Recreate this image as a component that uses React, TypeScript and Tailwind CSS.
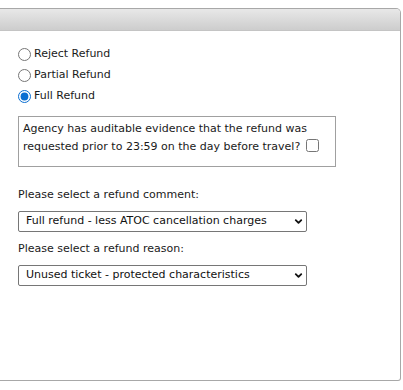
import { ChevronDown } from 'lucide-react'

const options = ['Reject Refund', 'Partial Refund', 'Full Refund']

function Select({ value }: { value: string }) {
  return (
    <div className="relative w-[289px] h-[21px]">
      <select
        defaultValue={value}
        className="appearance-none w-full h-full border border-[#767676] rounded-[2px] bg-white pl-[7px] pr-6 text-[11px] text-[#111] outline-none"
      >
        <option>{value}</option>
      </select>
      <ChevronDown
        className="absolute right-[3px] top-[5px] w-[11px] h-[11px] text-[#111] pointer-events-none"
        strokeWidth={4}
      />
    </div>
  )
}

export default function App() {
  return (
    <div className="w-[403px] h-[390px] bg-white pt-[8px] font-['DejaVu_Sans',sans-serif] text-[11px] text-[#1a1a1a]">
      <div className="w-[401px] h-[373px] border border-l-0 border-[#a8a8a8] rounded-tr-[5px] rounded-br-[3px] overflow-hidden flex flex-col">
        {/* header bar */}
        <div className="h-[22px] bg-gradient-to-b from-[#e8e8e8] to-[#cdcdcd] border-b border-[#c4c4c4]" />

        <div className="pl-[18px] pt-[13px]">
          {/* refund type */}
          <div className="flex flex-col">
            {options.map((o) => (
              <label key={o} className="h-[21px] flex items-center gap-[3px]">
                <input
                  type="radio"
                  name="refund"
                  defaultChecked={o === 'Full Refund'}
                  className="m-0 w-[13px] h-[13px] accent-[#0a6ed1]"
                />
                <span>{o}</span>
              </label>
            ))}
          </div>

          {/* evidence box */}
          <div className="mt-[9px] w-[318px] border border-[#a0a0a0] pl-[4px] pt-[3px] pb-[10px] leading-[18px]">
            Agency has auditable evidence that the refund was
            <br />
            requested prior to 23:59 on the day before travel?
            <input type="checkbox" className="ml-[6px] m-0 w-[13px] h-[13px] align-[-2px]" />
          </div>

          <p className="mt-[19px] leading-[18px]">Please select a refund comment:</p>
          <div className="mt-[7px]">
            <Select value="Full refund - less ATOC cancellation charges" />
          </div>

          <p className="mt-[8px] leading-[18px]">Please select a refund reason:</p>
          <div className="mt-[7px]">
            <Select value="Unused ticket - protected characteristics" />
          </div>
        </div>
      </div>
    </div>
  )
}
